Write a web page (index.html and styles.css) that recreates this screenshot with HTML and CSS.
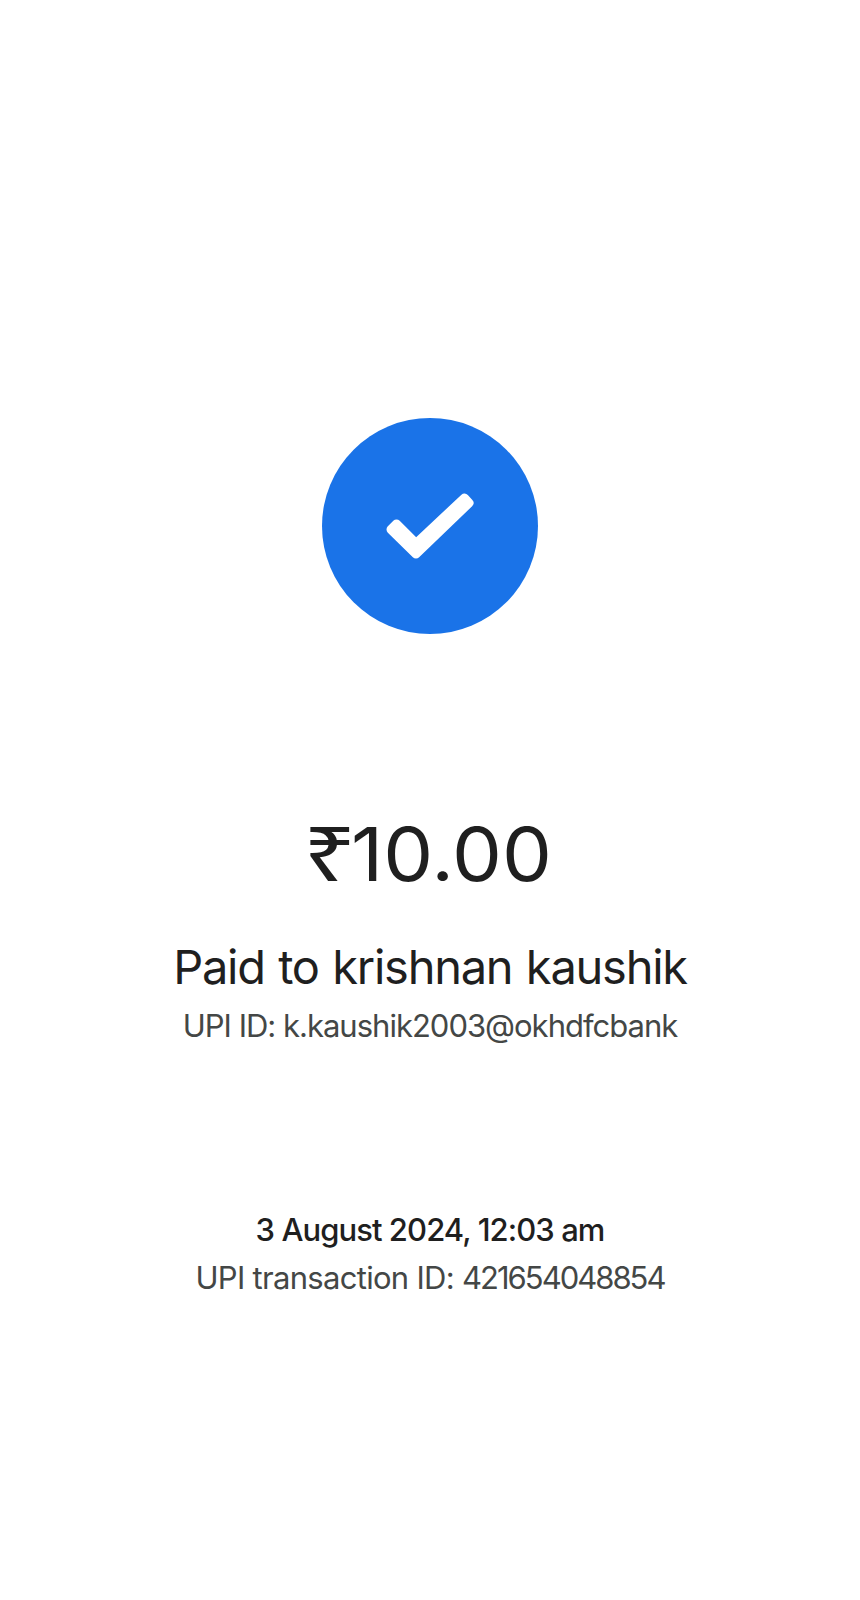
FILE: index.html
```html
<!DOCTYPE html>
<html lang="en">
<head>
<meta charset="utf-8">
<title>Payment successful</title>
<link rel="stylesheet" href="styles.css">
</head>
<body>
<main class="receipt">
  <svg class="status" viewBox="0 0 216 216" role="img" aria-label="Paid">
    <circle class="disc" cx="108" cy="108" r="108"/>
    <path class="tick" d="M69 111.5 74.5 106 94 125.5 142.5 80 147 85 94 136Z"/>
  </svg>
  <div class="amount"><span class="currency">₹</span><span class="value">10.00</span></div>
  <h1 class="payee">Paid to krishnan kaushik</h1>
  <div class="upi-id">UPI ID: k.kaushik2003@okhdfcbank</div>
  <div class="date">3 August 2024, 12:03 am</div>
  <div class="transaction">UPI transaction ID: <span class="number">421654048854</span></div>
</main>
</body>
</html>
```

FILE: styles.css
```css
body {
  margin: 0;
  background: #fff;
  color: #1f1f1f;
  font-family: Inter, Roboto, sans-serif;
}

.receipt {
  box-sizing: border-box;
  min-height: 1600px;
  padding-top: 418px;
  display: flex;
  flex-direction: column;
  align-items: center;
  white-space: nowrap;
}

.status {
  width: 216px;
  height: 216px;
}

.disc {
  fill: #1a73e8;
}

.tick {
  fill: #fff;
  stroke: #fff;
  stroke-width: 9;
  stroke-linejoin: round;
}

.amount {
  display: flex;
  align-items: baseline;
  width: 254px;
  margin-top: 168px;
  font-size: 74px;
  line-height: 100px;
}

.currency {
  width: 48px;
  font-family: "Noto Sans", sans-serif;
  font-size: 76px;
  line-height: 100px;
  transform: scaleX(1.23);
  transform-origin: left;
}

.value {
  transform: scaleX(1.07);
  transform-origin: left;
}

.payee {
  margin: 33px 0 0;
  font-size: 47px;
  font-weight: 380;
  line-height: 60px;
  letter-spacing: -1.25px;
  word-spacing: 1.5px;
}

.upi-id {
  margin-top: 9px;
  font-size: 31px;
  font-weight: 370;
  line-height: 40px;
  letter-spacing: -1px;
  color: #444746;
}

.date {
  margin-top: 164px;
  font-size: 31px;
  font-weight: 500;
  line-height: 40px;
  letter-spacing: -0.93px;
}

.transaction {
  margin-top: 8px;
  font-size: 31px;
  font-weight: 370;
  line-height: 40px;
  letter-spacing: -0.7px;
  color: #444746;
}

.number {
  letter-spacing: -2px;
}
```
